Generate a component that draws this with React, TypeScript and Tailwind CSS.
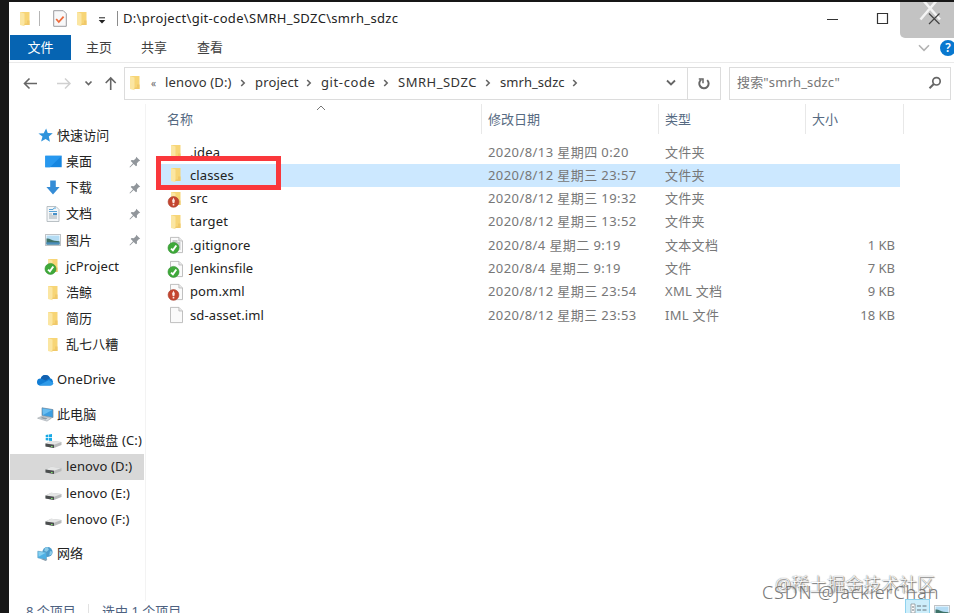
import type { ReactNode } from "react";

type Badge = "ok" | "bad";

function Folder({ badge }: { badge?: Badge }) {
  return (
    <svg viewBox="0 0 16 16" className="block h-4 w-4 shrink-0 overflow-visible">
      <path d="M3 1h9.500v13H3z" fill="#f7d576" />
      <path d="M3 1l4.500 1.600v12.600L3 14z" fill="#fbe6a2" />
      <path d="M10 9.500h2.500V14H7.500v-1.200l2.500-.6z" fill="#f0c869" />
      {badge && <BadgeMark kind={badge} />}
    </svg>
  );
}

function BadgeMark({ kind }: { kind: Badge }) {
  return kind === "ok" ? (
    <g>
      <circle cx="5.500" cy="10.900" r="5.500" fill="#3fa93a" stroke="#2b8f2c" strokeWidth=".6" />
      <path d="M3 11.600l1.900 1.700 3.400-4.800" fill="none" stroke="#fff" strokeWidth="1.9" />
    </g>
  ) : (
    <g>
      <circle cx="5.500" cy="10.900" r="5.400" fill="#c4452f" stroke="#a8402f" strokeWidth=".6" />
      <path d="M5.500 6.800l1.400 2.600-.6 2.800H4.700l-.6-2.800zM4.700 12.900h1.600v1.600H4.700z" fill="#fbe9e5" />
    </g>
  );
}

function Paper({ badge, lines }: { badge?: Badge; lines?: boolean }) {
  return (
    <svg viewBox="0 0 16 16" className="block h-4 w-4 shrink-0 overflow-visible">
      <path d="M2.500.4h8.400l3.600 3.600v11.600H2.500z" fill="#fafafa" stroke="#b0b0b0" strokeWidth=".8" />
      <path d="M10.900.4V4h3.600" fill="#e8e8e8" stroke="#b0b0b0" strokeWidth=".7" />
      {lines && <path d="M4.500 4h5M4.500 6h8M7 8h5.500M9.500 10h3M11.500 12h1" stroke="#8a8f93" strokeWidth=".9" />}
      {badge && <BadgeMark kind={badge} />}
    </svg>
  );
}

function Star() {
  return (
    <svg viewBox="0 0 14 14" className="block h-[15px] w-[15px]">
      <path d="M7.600.4l1.500 4.300 4.700.3-3.700 3 1 4.900-4-2.600-4.200 2.300 1.300-4.600L.4 5.200l4.900-.3z" fill="#2f94dc" />
    </svg>
  );
}

function Desktop() {
  return (
    <svg viewBox="0 0 17 13" className="block h-[13px] w-[17px]">
      <path d="M.3.8h16.400v11.400H.3z" fill="#1686e0" />
      <path d="M.3.8h16.400L5 12.200H.3z" fill="#2798ef" />
    </svg>
  );
}

function Download() {
  return (
    <svg viewBox="0 0 14 15" className="block h-[15px] w-[14px]">
      <path d="M4.200.5h5.600v6.600h3.800L7 14.400.4 7.100h3.800z" fill="#358cd6" />
    </svg>
  );
}

function DocIcon() {
  return (
    <svg viewBox="0 0 14 16" className="block h-4 w-[14px]">
      <path d="M1 .5h9l3 3v12H1z" fill="#f3f6f8" stroke="#a9b2b8" strokeWidth=".8" />
      <path d="M3 3.500h4l1-1.500h2M3 5.500h8" stroke="#5aa5d8" strokeWidth="1" fill="none" />
      <path d="M3 8h3M3 10h8M3 12h8" stroke="#9ba6ad" strokeWidth=".9" />
      <path d="M7 7h4v2H7z" fill="#4791c9" />
    </svg>
  );
}

function Picture() {
  return (
    <svg viewBox="0 0 16 12" className="block h-3 w-4">
      <path d="M.4.4h15.200v11.200H.4z" fill="#fff" stroke="#a4aaae" strokeWidth=".8" />
      <path d="M1.500 1.500h13v9h-13z" fill="#b4dcf4" />
      <path d="M1.500 4.500c3-.5 5 1.700 8 2.200l5 .5v3.300h-13z" fill="#3f7268" />
      <path d="M1.500 8.300h13v2.200h-13z" fill="#4a8dbd" />
    </svg>
  );
}

function Pin() {
  return (
    <svg viewBox="0 0 12 12" className="block h-3 w-3">
      <path d="M7.200.8l4 4-1.400.4-1.900 2.100.1 2.200-1 .8-2.400-2.400L1 11.400l-.5-.5L4 7.300 1.700 5l.9-.9 2.200.1 2.100-1.900z" fill="#91969b" />
    </svg>
  );
}

function Cloud() {
  return (
    <svg viewBox="0 0 17 12" className="block h-3 w-[17px]">
      <path d="M3.8 4.4A4.8 4.8 0 0112.9 4 4 4 0 0113.5 11.6H3.4A3.6 3.6 0 013.8 4.4z" fill="#117dd5" />
      <path d="M3.8 4.4A4.8 4.8 0 0112.9 4L8.8 6.6z" fill="#1261b0" />
      <path d="M2 11.2L12 6l4.5 3.3c-.5 1.5-1.7 2.3-3 2.3H3.4c-.5 0-1-.1-1.4-.4z" fill="#2f9be9" />
    </svg>
  );
}

function Computer() {
  return (
    <svg viewBox="0 0 17 15" className="block h-[15px] w-[17px]">
      <path d="M5 .8l11 1.8v8L5 8.6z" fill="#3c9ee1" stroke="#75889a" strokeWidth=".7" />
      <path d="M5.5 1.4l9.8 1.7L6 8z" fill="#6abdf0" />
      <path d="M.6 11.2l4.3-2 9.5 2-4.4 2.9z" fill="#d7dbdf" stroke="#979fa6" strokeWidth=".6" />
      <path d="M3 11.1l2.4-1 5.3 1.2-2.2 1.1z" fill="#909ba4" />
    </svg>
  );
}

function Drive({ system }: { system?: boolean }) {
  return (
    <svg viewBox="0 0 17 14" className="block h-[14px] w-[17px] overflow-visible">
      <path d="M.5 9.400L6 6.800l10.500 1.200v2.900L9 14 .5 12.400z" fill="#b9bbbc" />
      <path d="M.5 9.400L6 6.800l10.500 1.200L9 10.800z" fill="#e4e5e5" />
      <path d="M.5 9.400L9 10.800V14L.5 12.400z" fill="#4b4e4f" />
      <path d="M6 12.500h1.600" stroke="#7be36a" strokeWidth="1" />
      {system && <path d="M.7.9l2.6-.4v2.8H.7zM3.9.4L7 0v3.3H3.9zM.7 3.9h2.6v2.7L.7 6.2zM3.9 3.9H7v3.2l-3.1-.4z" fill="#18a9e5" />}
    </svg>
  );
}

function Network() {
  return (
    <svg viewBox="0 0 16 16" className="block h-4 w-4">
      <circle cx="10.5" cy="6" r="5.1" fill="#4c9bcc" />
      <path d="M8 1.7l2.5-.8 1.4 2.8-2.3 2-2.3-.8zM13 5l2.5.8-1 3-2.3.8z" fill="#8bcbe8" />
      <path d="M.8 5.200l8.700 1.300v7.300l-8.700-2z" fill="#4eb0e4" stroke="#5a9cc0" strokeWidth=".6" />
      <path d="M1.3 5.700l7.500 1.100-7.200 4z" fill="#86d0f1" />
      <path d="M4 13l2-.2 4.500 1-2 1.200z" fill="#889baa" />
    </svg>
  );
}

function Chevron({ className = "" }: { className?: string }) {
  return (
    <svg viewBox="0 0 8 8" className={`block h-2 w-2 ${className}`}>
      <path d="M2.2 1l3 3-3 3" fill="none" stroke="#666" strokeWidth="1.6" />
    </svg>
  );
}

interface NavItem {
  label: string;
  icon: ReactNode;
  root?: boolean;
  pinned?: boolean;
  active?: boolean;
}

const groups: NavItem[][] = [
  [
    { label: "快速访问", icon: <Star />, root: true },
    { label: "桌面", icon: <Desktop />, pinned: true },
    { label: "下载", icon: <Download />, pinned: true },
    { label: "文档", icon: <DocIcon />, pinned: true },
    { label: "图片", icon: <Picture />, pinned: true },
    { label: "jcProject", icon: <Folder badge="ok" /> },
    { label: "浩鲸", icon: <Folder /> },
    { label: "简历", icon: <Folder /> },
    { label: "乱七八糟", icon: <Folder /> },
  ],
  [{ label: "OneDrive", icon: <Cloud />, root: true }],
  [
    { label: "此电脑", icon: <Computer />, root: true },
    { label: "本地磁盘 (C:)", icon: <Drive system /> },
    { label: "lenovo (D:)", icon: <Drive />, active: true },
    { label: "lenovo (E:)", icon: <Drive /> },
    { label: "lenovo (F:)", icon: <Drive /> },
  ],
  [{ label: "网络", icon: <Network />, root: true }],
];

const files = [
  { name: ".idea", date: "2020/8/13 星期四 0:20", type: "文件夹", size: "", icon: <Folder /> },
  { name: "classes", date: "2020/8/12 星期三 23:57", type: "文件夹", size: "", icon: <Folder />, selected: true },
  { name: "src", date: "2020/8/12 星期三 19:32", type: "文件夹", size: "", icon: <Folder badge="bad" /> },
  { name: "target", date: "2020/8/12 星期三 13:52", type: "文件夹", size: "", icon: <Folder /> },
  { name: ".gitignore", date: "2020/8/4 星期二 9:19", type: "文本文档", size: "1 KB", icon: <Paper lines badge="ok" /> },
  { name: "Jenkinsfile", date: "2020/8/4 星期二 9:19", type: "文件", size: "7 KB", icon: <Paper badge="ok" /> },
  { name: "pom.xml", date: "2020/8/12 星期三 23:54", type: "XML 文档", size: "9 KB", icon: <Paper badge="bad" /> },
  { name: "sd-asset.iml", date: "2020/8/12 星期三 23:53", type: "IML 文件", size: "18 KB", icon: <Paper /> },
];

const crumbs = [
  { label: "lenovo (D:)", width: "w-[90px]", track: "tracking-[0.15px]" },
  { label: "project", width: "w-[66px]", track: "tracking-[0.15px]" },
  { label: "git-code", width: "w-[77px]", track: "tracking-[0.6px]" },
  { label: "SMRH_SDZC", width: "w-[102px]", track: "tracking-[0.5px]" },
  { label: "smrh_sdzc", width: "w-[87px]", track: "tracking-[0.05px]" },
];

function TitleBar() {
  return (
    <div className="flex h-[33px] shrink-0 items-center">
      <div className="ml-[8px]"><Folder /></div>
      <div className="ml-[6px] h-[15px] w-px bg-[#b5b5b5]" />
      <svg viewBox="0 0 14 17" className="ml-[13px] h-[17px] w-[14px]">
        <path d="M.7.7h9.600l3 3v12.600H.7z" fill="#f8f8f9" stroke="#8e8e94" strokeWidth=".9" />
        <path d="M3.200 9l2.600 3 4.800-5.400" fill="none" stroke="#ee6b3c" strokeWidth="1.8" />
      </svg>
      <div className="ml-[7px]"><Folder /></div>
      <svg viewBox="0 0 8 7" className="mt-[4px] ml-[8px] h-[7px] w-[8px]">
        <path d="M1 .8h6" stroke="#222" strokeWidth="1" />
        <path d="M.7 3h6.600L4 6.400z" fill="#222" />
      </svg>
      <div className="ml-[11px] h-[15px] w-px bg-[#8c8c8c]" />
      <span className="ml-[5px] w-[290px] tracking-[0.31px] text-[#222]">D:\project\git-code\SMRH_SDZC\smrh_sdzc</span>
      <svg viewBox="0 0 66 14" className="ml-[413px] h-[14px] w-[66px]">
        <path d="M1 7.500h11" stroke="#333" strokeWidth="1" />
        <path d="M51.500 1.500h10v10h-10z" fill="none" stroke="#333" strokeWidth="1.2" />
      </svg>
    </div>
  );
}

function MenuBar() {
  return (
    <div className="flex h-[25px] shrink-0 items-center text-[#3f3f3f]">
      <span className="ml-px flex h-full w-[61px] items-center justify-center bg-[#0664b2] text-white">文件</span>
      <span className="ml-[15px] w-[55px]">主页</span>
      <span className="w-[56px]">共享</span>
      <span className="w-[60px]">查看</span>
      <svg viewBox="0 0 12 8" className="ml-auto h-2 w-3">
        <path d="M1 1.300l5 5 5-5" fill="none" stroke="#b2b2b2" strokeWidth="1.6" />
      </svg>
      <span className="-mr-[2px] ml-[10px] flex h-4 w-4 items-center justify-center rounded-full bg-[#0878cf] text-[12px] font-semibold text-white">?</span>
    </div>
  );
}

function AddressBar() {
  return (
    <div className="mt-[4px] flex h-[33px] shrink-0 items-center text-[#333]">
      <svg viewBox="0 0 110 20" className="mb-[2px] ml-[5px] h-[20px] w-[110px]" fill="none">
        <path d="M23 10.500H10.500M15.500 5.500l-5 5 5 5" stroke="#666" strokeWidth="1.6" />
        <path d="M43 10.500h13M51 5.500l5 5-5 5" stroke="#d0d0d0" strokeWidth="1.5" />
        <path d="M71.500 8.500l3 3 3-3" stroke="#666" strokeWidth="1.7" />
        <path d="M96.700 17V5M91.700 10l5-5 5 5" stroke="#666" strokeWidth="1.6" />
      </svg>
      <div className="flex h-full w-[597px] items-center border border-[#dcdcdc] pb-[2px]">
        <div className="ml-[2px]"><Folder /></div>
        <span className="ml-[8px] w-[14px] text-[10px] leading-4 text-[#666]">«</span>
        {crumbs.map((c) => (
          <span key={c.label} className={`flex shrink-0 items-center justify-between ${c.width} ${c.track}`}>
            {c.label}
            <Chevron className="mr-[8px]" />
          </span>
        ))}
        <svg viewBox="0 0 10 8" className="mr-[11px] ml-auto h-2 w-[10px]">
          <path d="M1 1.500l4 4 4-4" fill="none" stroke="#666" strokeWidth="1.8" />
        </svg>
        <div className="-mb-[2px] flex h-[31px] w-[33px] items-center justify-center border-l border-[#dcdcdc]">
          <svg viewBox="0 0 14 14" className="h-[14px] w-[14px]">
            <path d="M4.200 2.700A4.700 4.700 0 1010.200 3.100" fill="none" stroke="#666" strokeWidth="2" />
            <path d="M1.800 2h4.200v4.200" fill="none" stroke="#666" strokeWidth="1.5" />
          </svg>
        </div>
      </div>
      <div className="ml-[8px] flex h-full w-[222px] items-center border border-[#dcdcdc] pb-[2px] text-[#777]">
        <span className="ml-[7px] tracking-[0.15px]">搜索"smrh_sdzc"</span>
        <svg viewBox="0 0 14 14" className="mr-[8px] ml-auto h-[14px] w-[14px]">
          <circle cx="8.500" cy="5.300" r="3.700" fill="none" stroke="#666" strokeWidth="1.7" />
          <path d="M5.800 8L1.500 12.300" stroke="#666" strokeWidth="2" />
        </svg>
      </div>
    </div>
  );
}

function Sidebar() {
  return (
    <nav className="flex w-[137px] shrink-0 flex-col gap-[8.6px] border-r border-[#f3f3f3] pt-[18.3px] text-[#222]">
      {groups.map((g, i) => (
        <div key={i}>
          {g.map((n) => (
            <div
              key={n.label}
              className={`ml-px flex h-[26.2px] w-[134px] items-center tracking-[0.12px] ${n.active ? "bg-[#d8d8d8]" : ""} ${n.root ? "pl-[25px]" : "pl-[34px]"}`}
            >
              <span className={`flex shrink-0 justify-center ${n.root ? "w-[20px]" : "w-[18px]"}`}>{n.icon}</span>
              <span className={n.root ? "ml-[2px]" : "ml-[4px]"}>{n.label}</span>
              {n.pinned && <span className="mr-[3px] ml-auto"><Pin /></span>}
            </div>
          ))}
        </div>
      ))}
    </nav>
  );
}

function FileList() {
  return (
    <main className="flex min-w-0 flex-1 flex-col">
      <svg viewBox="0 0 10 6" className="mt-px -mb-[7px] ml-[170px] h-[6px] w-[10px]">
        <path d="M1 5l4-4 4 4" fill="none" stroke="#777" strokeWidth="1" />
      </svg>
      <div className="flex h-[30px] items-center text-[#566a82]">
        <span className="ml-[21px] flex h-full w-[315px] items-center border-r border-[#e8e8e8]">名称</span>
        <span className="flex h-full w-[177px] items-center border-r border-[#e8e8e8] pl-[6px]">修改日期</span>
        <span className="flex h-full w-[147px] items-center border-r border-[#e8e8e8] pl-[6px]">类型</span>
        <span className="flex h-full w-[98px] items-center border-r border-[#e8e8e8] pl-[6px]">大小</span>
      </div>
      <div className="mt-[6.4px] ml-[15px] w-[739px]">
        {files.map((f) => (
          <div key={f.name} className={`flex h-[23.3px] items-center text-[#777] ${f.selected ? "bg-[#cce8ff]" : ""}`}>
            <span className="ml-[7px] flex w-[22px]">{f.icon}</span>
            <span className="w-[298px] tracking-[0.12px] text-[#222]">{f.name}</span>
            <span className="w-[177px] tracking-[0.42px]">{f.date}</span>
            <span className="w-[150px] tracking-[0.3px]">{f.type}</span>
            <span className="ml-auto pr-[5px]">{f.size}</span>
          </div>
        ))}
      </div>
    </main>
  );
}

export default function App() {
  return (
    <div className="relative h-[613px] w-[954px] overflow-hidden bg-[#171717] pt-[2px] pl-[9px] font-['Noto_Sans','Noto_Sans_CJK_SC',sans-serif] text-[13px] leading-none whitespace-nowrap">
      <div className="flex h-[611px] flex-col bg-white">
        <TitleBar />
        <MenuBar />
        <div className="mt-[2px] h-px shrink-0 bg-[#eaeaea]" />
        <AddressBar />
        <div className="mt-[4px] flex h-[497px] shrink-0">
          <Sidebar />
          <FileList />
        </div>
        <footer className="flex h-[20px] shrink-0 items-center pl-[17px] text-[#4d6180]">
          <span className="w-[62px]">8 个项目</span>
          <span className="h-[14px] w-px bg-[#e2e2e2]" />
          <span className="ml-[13px]">选中 1 个项目</span>
        </footer>
      </div>

      <div className="absolute top-[156px] left-[156px] h-[34px] w-[125px] border-[5px] border-[#fa373b]" />

      <div className="absolute top-[2px] left-[900px] h-[36px] w-[54px] overflow-hidden rounded-bl-[5px] bg-[#c3c3c3]">
        <svg viewBox="0 0 54 36" className="h-full w-full" fill="none">
          <path d="M20.500 17.500L38-3M22-3l18 20.500" stroke="#f4f4f4" strokeWidth="2.500" />
          <path d="M29 11.500l10.500 10.500M39.500 11.500L29 22" stroke="#444" strokeWidth="1.2" />
        </svg>
      </div>

      <div className="absolute top-[599px] left-[905px] h-[20px] w-[25px] border border-[#8fd2ee] bg-[#cdeefb]">
        <svg viewBox="0 0 23 13" className="h-[13px] w-[23px]">
          <path d="M5 4h4v9H5z" fill="#fff" stroke="#8a9298" strokeWidth=".8" />
          <path d="M6 7h2M6 10h2M11 6h4M16.500 6h4M11 10h4M16.500 10h4" stroke="#68757d" strokeWidth="1" />
        </svg>
      </div>
      <div className="absolute top-[605px] left-[934px]"><Picture /></div>

      <div className="absolute top-[573px] left-[775px] text-[18px] leading-[22px] font-light text-white [text-shadow:0_0_1px_#555,1px_1px_1px_#777]">@稀土掘金技术社区</div>
      <div className="absolute top-[581px] left-[762px] text-[18px] leading-[22px] font-light tracking-[0.85px] text-[#777]">CSDN @JackierChan</div>
    </div>
  );
}
